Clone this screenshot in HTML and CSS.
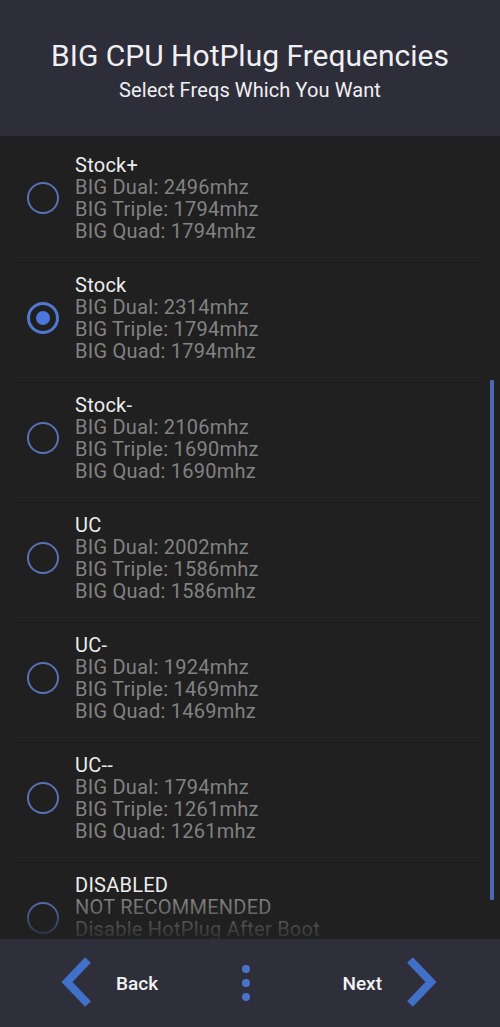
FILE: index.html
```html
<!DOCTYPE html>
<html>
<head>
<meta charset="utf-8">
<link rel="stylesheet" href="styles.css">
</head>
<body>
<div class="screen">
  <header class="header">
    <div class="title">BIG CPU HotPlug Frequencies</div>
    <div class="subtitle">Select Freqs Which You Want</div>
  </header>
  <main class="list">
    <div class="item">
      <span class="radio"></span>
      <div class="text"><div class="name">Stock+</div><div class="sub">BIG Dual: 2496mhz</div><div class="sub">BIG Triple: 1794mhz</div><div class="sub">BIG Quad: 1794mhz</div></div>
    </div>
    <div class="item">
      <span class="radio checked"></span>
      <div class="text"><div class="name">Stock</div><div class="sub">BIG Dual: 2314mhz</div><div class="sub">BIG Triple: 1794mhz</div><div class="sub">BIG Quad: 1794mhz</div></div>
    </div>
    <div class="item">
      <span class="radio"></span>
      <div class="text"><div class="name">Stock-</div><div class="sub">BIG Dual: 2106mhz</div><div class="sub">BIG Triple: 1690mhz</div><div class="sub">BIG Quad: 1690mhz</div></div>
    </div>
    <div class="item">
      <span class="radio"></span>
      <div class="text"><div class="name">UC</div><div class="sub">BIG Dual: 2002mhz</div><div class="sub">BIG Triple: 1586mhz</div><div class="sub">BIG Quad: 1586mhz</div></div>
    </div>
    <div class="item">
      <span class="radio"></span>
      <div class="text"><div class="name">UC-</div><div class="sub">BIG Dual: 1924mhz</div><div class="sub">BIG Triple: 1469mhz</div><div class="sub">BIG Quad: 1469mhz</div></div>
    </div>
    <div class="item">
      <span class="radio"></span>
      <div class="text"><div class="name">UC--</div><div class="sub">BIG Dual: 1794mhz</div><div class="sub">BIG Triple: 1261mhz</div><div class="sub">BIG Quad: 1261mhz</div></div>
    </div>
    <div class="item">
      <span class="radio"></span>
      <div class="text"><div class="name">DISABLED</div><div class="sub">NOT RECOMMENDED</div><div class="sub">Disable HotPlug After Boot</div><div class="sub">&nbsp;</div></div>
    </div>
    <div class="fade"></div>
    <div class="scrollbar"></div>
  </main>
  <footer class="footer">
    <div class="nav back">
      <svg class="chev" width="34" height="52" viewBox="0 0 34 52"><polyline points="28,3 7,25 28,47" fill="none" stroke="#4170c8" stroke-width="8" stroke-linecap="butt" stroke-linejoin="miter"/></svg>
      <span class="navlabel">Back</span>
    </div>
    <div class="dots"><span></span><span></span><span></span></div>
    <div class="nav next">
      <span class="navlabel">Next</span>
      <svg class="chev" width="34" height="52" viewBox="0 0 34 52"><polyline points="6,3 27,25 6,47" fill="none" stroke="#4170c8" stroke-width="8" stroke-linecap="butt" stroke-linejoin="miter"/></svg>
    </div>
  </footer>
</div>
</body>
</html>
```

FILE: styles.css
```css
* { box-sizing: border-box; }
html, body { margin: 0; padding: 0; background: #202020; }
body { font-family: Roboto, "Noto Sans", sans-serif; }
.screen { width: 500px; height: 1027px; display: flex; flex-direction: column; overflow: hidden; }
.header {
  height: 136px; flex: none; background: #2e2e3a;
  display: flex; flex-direction: column; align-items: center;
  padding-top: 38px;
}
.title { font-size: 30px; line-height: 36px; color: #f0f0f2; }
.subtitle { font-size: 20px; line-height: 24px; color: #f0f0f2; margin-top: 4px; letter-spacing: 0.1px; }
.list { flex: 1; position: relative; overflow: hidden; background: #202020; padding-top: 2px; }
.item {
  height: 120px; display: flex; align-items: center;
  margin-left: 16px; margin-right: 16px;
  border-bottom: 1px solid #272727;
}
.radio {
  width: 32px; height: 32px; border-radius: 50%;
  border: 2px solid #5872b8; margin-left: 11px; margin-right: 16px; flex: none;
  display: flex; align-items: center; justify-content: center;
}
.radio.checked { border: 3px solid #5178d0; }
.radio.checked::after { content: ""; width: 14px; height: 14px; border-radius: 50%; background: #4b76dc; }
.text { font-size: 20px; line-height: 22px; letter-spacing: 0.25px; }
.name { color: #ececec; }
.sub { color: #828282; }
.fade {
  position: absolute; left: 0; right: 0; bottom: 0; height: 40px;
  background: linear-gradient(to bottom, rgba(32,32,32,0), rgba(32,32,32,0.85));
}
.scrollbar { position: absolute; left: 490px; top: 244px; width: 4px; height: 520px; background: #4a68b0; border-radius: 1px; }
.footer {
  height: 88px; flex: none; background: #2f2f3b;
  display: flex; align-items: center; justify-content: space-between;
  padding: 0 62px 0 60px;
}
.nav { display: flex; align-items: center; }
.navlabel { font-size: 19px; font-weight: 500; color: #f2f2f2; }
.back .chev { margin-right: 22px; }
.next .chev { margin-left: 22px; }
.dots { display: flex; flex-direction: column; gap: 6px; margin-left: -8px; }
.dots span { width: 8px; height: 8px; border-radius: 50%; background: #4a74cc; }
```
